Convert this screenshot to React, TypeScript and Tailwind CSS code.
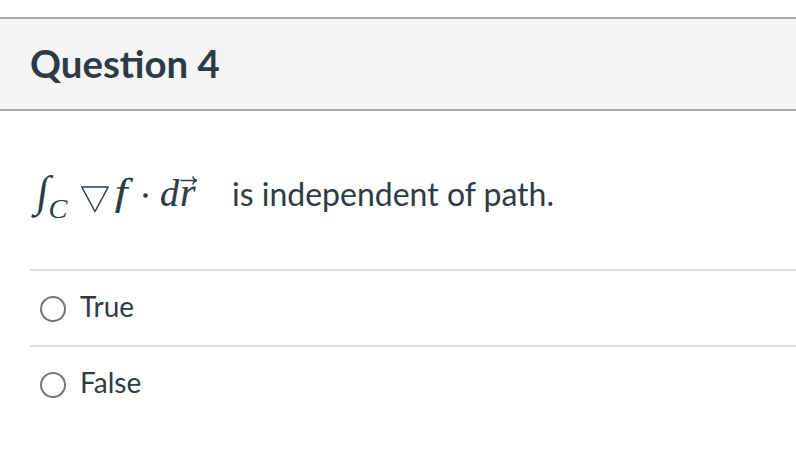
const answers = ["True", "False"];

const Formula = () => (
  <div
    className="h-[60px] w-[180px] shrink-0 text-[38px] leading-[57px] whitespace-nowrap"
    style={{ fontFamily: '"Liberation Serif", serif' }}
  >
    <span className="ml-[7px] inline-block w-[12px] -skew-x-[8deg] text-[43.5px] leading-none">
      ∫
    </span>
    <span className="inline-block w-[18px] scale-x-105 align-[-12px] text-[27px] leading-none italic">C</span>
    <svg
      className="ml-[14px] inline-block align-[-7px]"
      width="28"
      height="27"
      viewBox="0 0 28 27"
      fill="none"
      stroke="currentColor"
    >
      <path d="M0.800 1H27.200L14 25.500Z" strokeWidth="1.500" strokeLinejoin="round" />
    </svg>
    <span className="ml-[7px] inline-block w-[10px] scale-x-125 align-[1px] text-[37px] leading-none italic [-webkit-text-stroke:0.2px]">
      f
    </span>
    <svg className="ml-[17px] inline-block align-[8px]" width="5" height="5" viewBox="0 0 5 5" fill="currentColor">
      <circle cx="2.500" cy="2.500" r="2.300" />
    </svg>
    <span className="ml-[12px] inline-block w-[20px] text-[38px] leading-none italic [-webkit-text-stroke:0.2px]">
      d
    </span>
    <span className="relative inline-block w-[16px] text-[40px] leading-none italic [-webkit-text-stroke:0.2px]">
      r
      <svg
        className="absolute top-[3px] left-0"
        width="18"
        height="9"
        viewBox="0 0 18 9"
        fill="none"
        stroke="currentColor"
        strokeLinecap="round"
      >
        <path d="M1 4.500H16.500M13 1C13.500 3 15 4 17 4.500C15 5 13.500 6 13 8" strokeWidth="1.400" />
      </svg>
    </span>
  </div>
);

const App = () => {
  return (
    <div
      className="flex h-[450px] flex-col overflow-hidden bg-white pt-[17px] text-[#2d3b45]"
      style={{ fontFamily: "Lato, sans-serif" }}
    >
      <header className="flex h-[94px] shrink-0 items-center border-y-2 border-[#aaaaaa] bg-[#f5f5f5] pl-[30px]">
        <h1 className="text-[38.4px] font-bold">Question 4</h1>
      </header>
      <div className="flex flex-col gap-11 pt-[54px] pl-[30px]">
        <div className="flex h-[60px] items-center gap-[22px]">
          <Formula />
          <p className="pb-[3px] text-[32px] whitespace-nowrap">is independent of path.</p>
        </div>
        <div className="flex flex-col">
          {answers.map((answer) => (
            <label key={answer} className="flex h-[76px] items-center gap-[14px] border-t-2 border-[#dddddd] pl-[10px]">
              <input
                type="radio"
                name="answer"
                className="mt-[2px] size-[26px] appearance-none rounded-full border-2 border-[#767676] bg-white"
              />
              <span className="pb-1 text-[28px]">{answer}</span>
            </label>
          ))}
        </div>
      </div>
    </div>
  );
};

export default App;
